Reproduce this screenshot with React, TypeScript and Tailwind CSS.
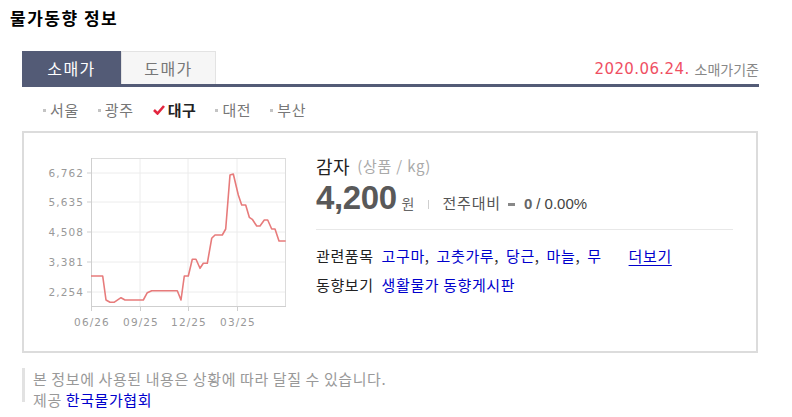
import React from "react";

const KR = { fontFamily: '"Noto Sans CJK KR", "Noto Sans", sans-serif' };
const LIB = { fontFamily: '"Liberation Sans", Arial, sans-serif' };

const pts =
  "91,276 102.7,276 106,300 110,302.3 114,302.3 121,297.7 125,300 143.3,300 147.3,292.7 151.7,290.7 177.3,290.7 181,300 184.3,276 188.3,276 192.3,259.3 196,259.3 200,268.3 203.3,263.3 207.3,263.3 211.7,238.3 215,235 222.3,235 225.7,229 230,175 233.3,174 238.3,195 241.7,205 245.7,205 249.3,217.3 252.3,219.3 256.7,226 260,226 264.3,220 267.7,220 271.7,229 275,229 279,241 285.7,241";

const yLabels: [string, number][] = [
  ["6,762", 173],
  ["5,635", 202],
  ["4,508", 232],
  ["3,381", 262],
  ["2,254", 292],
];
const xLabels: [string, number][] = [
  ["06/26", 91],
  ["09/25", 140],
  ["12/25", 188],
  ["03/25", 237],
];

function Chart() {
  return (
    <svg width={276} height={218} viewBox="24 133 276 218" className="shrink-0">
      {yLabels.map(([, y]) => (
        <line key={"h" + y} x1={91} x2={286} y1={y} y2={y} stroke="#ececec" strokeWidth={1} />
      ))}
      {xLabels.slice(1).map(([, x]) => (
        <line key={"v" + x} x1={x} x2={x} y1={158} y2={307} stroke="#ececec" strokeWidth={1} />
      ))}
      <line x1={91} x2={286} y1={158.5} y2={158.5} stroke="#dcdcdc" />
      <line x1={285.5} x2={285.5} y1={158} y2={307} stroke="#dcdcdc" />
      <line x1={91.5} x2={91.5} y1={158} y2={307} stroke="#cfcfcf" />
      <line x1={91} x2={286} y1={306.5} y2={306.5} stroke="#cfcfcf" />
      {yLabels.map(([t, y]) => (
        <g key={t}>
          <line x1={87} x2={91} y1={y} y2={y} stroke="#cfcfcf" />
          <text
            x={84}
            y={y + 4}
            textAnchor="end"
            fontSize={10.5}
            letterSpacing={1.1}
            fill="#999"
            fontFamily='"DejaVu Sans", sans-serif'
          >
            {t}
          </text>
        </g>
      ))}
      {xLabels.map(([t, x]) => (
        <g key={t}>
          <line x1={x + 0.5} x2={x + 0.5} y1={307} y2={311} stroke="#cfcfcf" />
          <text
            x={x + 1}
            y={326}
            textAnchor="middle"
            fontSize={10.5}
            letterSpacing={1.1}
            fill="#999"
            fontFamily='"DejaVu Sans", sans-serif'
          >
            {t}
          </text>
        </g>
      ))}
      <polyline points={pts} fill="none" stroke="#e77b7b" strokeWidth={1.6} strokeLinejoin="round" />
    </svg>
  );
}

function Bullet() {
  return <span className="inline-block w-[3px] h-[3px] bg-[#c4c4c4] mr-[4px]" />;
}

export default function App() {
  const cities = ["서울", "광주", "대구", "대전", "부산"];
  return (
    <div className="w-[792px] h-[417px] bg-white overflow-hidden text-[#333]" style={KR}>
      <div className="pl-[10px] pt-[8px] h-[28px] text-[17px] leading-[20px] font-bold text-black tracking-[1.5px]">
        물가동향 정보
      </div>

      <div className="ml-[22px] w-[737px] mt-[23px]">
        <div className="flex h-[36px] border-b-[3px] border-[#535b76]">
          <div className="w-[99px] h-[33px] bg-[#535b76] text-white text-[16px] tracking-[1.5px] flex items-center justify-center">
            소매가
          </div>
          <div className="w-[95px] h-[33px] bg-[#f6f6f6] border border-b-0 border-[#e3e3e3] text-[#777] text-[16px] tracking-[1.5px] flex items-center justify-center">
            도매가
          </div>
          <div className="ml-auto flex items-center pt-[3px] h-[33px]">
            <span
              className="text-[15px] text-[#ef4f63] tracking-[0.4px]"
              style={{ fontFamily: '"DejaVu Sans", sans-serif' }}
            >
              2020.06.24.
            </span>
            <span className="ml-[5px] text-[14px] text-[#888]">소매가기준</span>
          </div>
        </div>

        <div className="mt-[11px] h-[24px] flex items-center pl-[21px] text-[15px] tracking-[0.6px] text-[#777]">
          {cities.map((c) =>
            c === "대구" ? (
              <span key={c} className="flex items-center mr-[19px]">
                <svg width={12} height={10} viewBox="0 0 12 10" className="mr-[3px]">
                  <polyline points="1,5 4.5,8.5 11,1" fill="none" stroke="#e3263f" strokeWidth={2.6} />
                </svg>
                <span className="font-bold text-[#222]">{c}</span>
              </span>
            ) : (
              <span key={c} className="flex items-center mr-[19px]">
                <Bullet />
                {c}
              </span>
            )
          )}
        </div>
      </div>

      <div className="mt-[9px] ml-[22px] w-[736px] h-[222px] border-2 border-[#dcdcdc] flex">
        <Chart />
        <div className="ml-[16px] w-[417px]">
          <div className="mt-[20px] h-[26px] flex items-center">
            <span className="text-[18px] text-[#222] tracking-[0.5px]">감자</span>
            <span className="ml-[7px] text-[15px] text-[#aaa] tracking-[0.8px]">(상품 / kg)</span>
          </div>
          <div className="h-[38px] flex items-baseline">
            <span
              className="text-[33px] font-bold text-[#595959] tracking-[-0.4px] leading-[38px]"
              style={LIB}
            >
              4,200
            </span>
            <span className="ml-[5px] text-[14px] text-[#666]">원</span>
            <span className="ml-[14px] inline-block w-px h-[9px] bg-[#cfcfcf]" />
            <span className="ml-[13px] text-[15px] tracking-[0.8px] text-[#555]">전주대비</span>
            <span className="ml-[7px] inline-block w-[7px] h-[3px] bg-[#888] relative -top-[3px]" />
            <span className="ml-[9px] text-[15px] font-bold text-[#666]" style={LIB}>
              0
            </span>
            <span className="ml-[4px] text-[15px] text-[#444]" style={LIB}>
              / 0.00%
            </span>
          </div>
          <div className="mt-[12px] h-px bg-[#e8e8e8]" />
          <div className="mt-[12px] h-[29px] flex items-center text-[15px] tracking-[0.6px]">
            <span className="text-[#222]">관련품목</span>
            <span className="ml-[8px] text-[#0000cc]">고구마</span>
            <span className="text-[#333]">,</span>
            <span className="ml-[7px] text-[#0000cc]">고춧가루</span>
            <span className="text-[#333]">,</span>
            <span className="ml-[7px] text-[#0000cc]">당근</span>
            <span className="text-[#333]">,</span>
            <span className="ml-[7px] text-[#0000cc]">마늘</span>
            <span className="text-[#333]">,</span>
            <span className="ml-[7px] text-[#0000cc]">무</span>
            <span className="ml-[27px] text-[#0000cc] underline underline-offset-[3px]">더보기</span>
          </div>
          <div className="h-[29px] flex items-center text-[15px] tracking-[0.6px]">
            <span className="text-[#222]">동향보기</span>
            <span className="ml-[8px] text-[#0000cc]">생활물가 동향게시판</span>
          </div>
        </div>
      </div>

      <div className="mt-[18px] ml-[22px] h-[34px] border-l-[3px] border-[#e2e2e2] pl-[8px]">
        <div className="-mt-[3px] text-[15px] tracking-[0.6px] leading-[21px] text-[#999]">
          <div>본 정보에 사용된 내용은 상황에 따라 달질 수 있습니다.</div>
          <div>
            제공 <span className="text-[#0000cc]">한국물가협회</span>
          </div>
        </div>
      </div>
    </div>
  );
}
